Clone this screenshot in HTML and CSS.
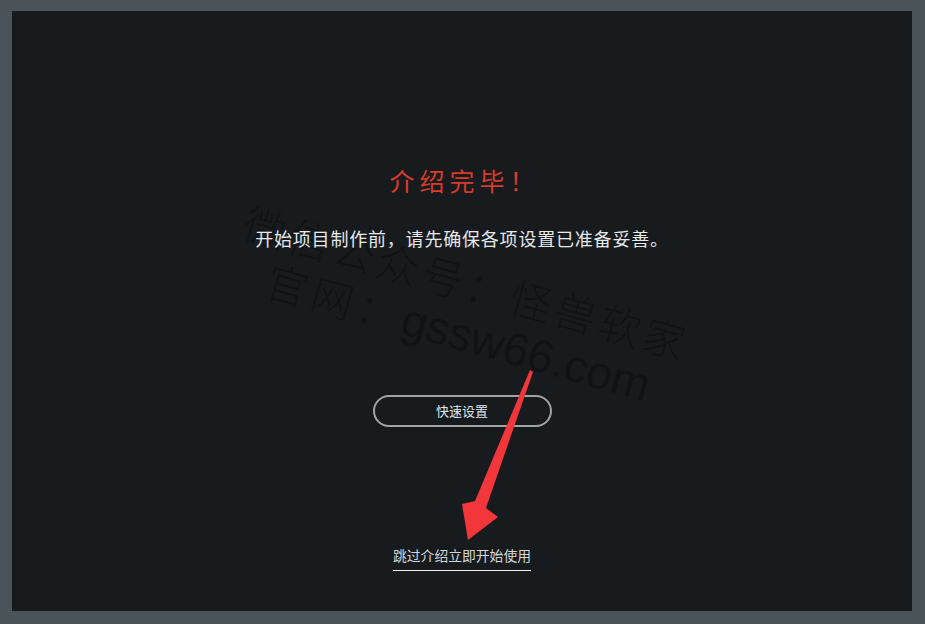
FILE: index.html
```html
<!DOCTYPE html>
<html lang="zh">
<head>
<meta charset="utf-8">
<title>介绍完毕</title>
<link rel="stylesheet" href="styles.css">
</head>
<body>
<div class="panel">
  <div class="watermark">
    <div class="wm-line wm-1">微信公众号：怪兽软家</div>
    <div class="wm-line wm-2"><span class="wm-cjk">官网：</span><span class="wm-latin">gssw66.com</span></div>
  </div>
  <h1 class="title">介绍完毕！</h1>
  <p class="subtitle">开始项目制作前，请先确保各项设置已准备妥善。</p>
  <button class="quick-btn">快速设置</button>
  <a class="skip-link" href="#">跳过介绍立即开始使用</a>
  <svg class="arrow" width="900" height="600" viewBox="0 0 900 600">
    <polygon fill="#f2363a" points="518,359 521,361 474,497 486,506 456,529 450,493 463,490"/>
  </svg>
</div>
</body>
</html>
```
FILE: styles.css
```css
html, body {
  margin: 0;
  padding: 0;
}
body {
  background: #4a5357;
  width: 925px;
  height: 624px;
  padding: 11px 13px 13px 12px;
  box-sizing: border-box;
  font-family: "Noto Sans CJK SC", "Noto Sans", sans-serif;
}
.panel {
  position: relative;
  width: 900px;
  height: 600px;
  background: #171b1e;
  display: flex;
  flex-direction: column;
  align-items: center;
  overflow: hidden;
}
.title,
.subtitle,
.quick-btn,
.skip-link {
  position: relative;
  z-index: 1;
}
.title {
  margin: 155px 0 0 0;
  font-size: 25px;
  line-height: 29px;
  font-weight: 400;
  letter-spacing: 5px;
  padding-left: 5px;
  color: #d93a2b;
}
.subtitle {
  margin: 30px 0 0 0;
  font-size: 18px;
  line-height: 26px;
  letter-spacing: 0.8px;
  color: #e6e8ea;
}
.quick-btn {
  margin-top: 144px;
  width: 179px;
  height: 32px;
  border: 2px solid #a3a3a3;
  border-radius: 16px;
  background: transparent;
  color: #dfe5ea;
  font-family: "Noto Sans CJK SC", "Noto Sans", sans-serif;
  font-size: 13px;
  line-height: 20px;
  padding: 0;
}
.skip-link {
  margin-top: 118px;
  font-size: 13.8px;
  line-height: 20px;
  color: #d4d8dc;
  text-decoration: none;
  padding-bottom: 5px;
  border-bottom: 1px solid #f0f0f0;
}
.watermark {
  position: absolute;
  left: 0;
  top: 0;
  width: 900px;
  height: 600px;
  z-index: 0;
  pointer-events: none;
}
.wm-line {
  position: absolute;
  font-family: "Noto Sans CJK SC", sans-serif;
  font-size: 42px;
  font-weight: 300;
  line-height: 48px;
  color: #101316;
  white-space: nowrap;
  transform-origin: 0 0;
  transform: rotate(15.5deg);
}
.wm-1 {
  left: 240px;
  top: 186px;
  letter-spacing: 4px;
}
.wm-2 {
  left: 262px;
  top: 244px;
}
.wm-cjk {
  letter-spacing: 5px;
}
.wm-latin {
  font-family: "Liberation Sans", sans-serif;
  font-size: 46px;
  font-weight: 400;
}
.arrow {
  position: absolute;
  left: 0;
  top: 0;
  z-index: 2;
}
```
